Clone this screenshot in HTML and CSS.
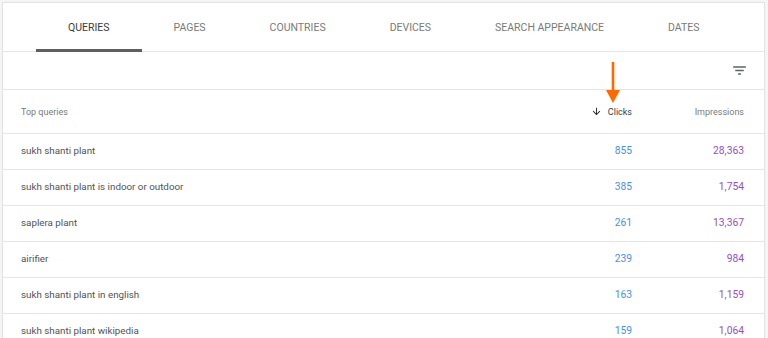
FILE: index.html
```html
<!DOCTYPE html>
<html lang="en">
<head>
    <meta charset="UTF-8">
    <meta name="viewport" content="width=device-width, initial-scale=1.0">
    <title>Performance - Queries</title>
    <link rel="stylesheet" href="styles.css">
</head>
<body>
    <div class="card">
        <div class="tabs">
            <div class="tab active">Queries</div>
            <div class="tab">Pages</div>
            <div class="tab">Countries</div>
            <div class="tab">Devices</div>
            <div class="tab">Search appearance</div>
            <div class="tab">Dates</div>
        </div>

        <div class="toolbar">
            <svg class="filter-icon" width="18" height="18" viewBox="0 0 24 24" fill="#5f6368">
                <path d="M10 18h4v-2h-4v2zM3 6v2h18V6H3zm3 7h12v-2H6v2z"/>
            </svg>
        </div>

        <div class="table">
            <div class="row head">
                <div class="cell">Top queries</div>
                <div class="cell num sorted">
                    <svg width="11" height="11" viewBox="0 0 24 24" fill="#202124">
                        <path d="M20 12l-1.41-1.41L13 16.17V4h-2v12.17l-5.58-5.59L4 12l8 8 8-8z"/>
                    </svg>
                    Clicks
                </div>
                <div class="cell num">Impressions</div>
            </div>
            <div class="row">
                <div class="cell">sukh shanti plant</div>
                <div class="cell num clicks">855</div>
                <div class="cell num impr">28,363</div>
            </div>
            <div class="row">
                <div class="cell">sukh shanti plant is indoor or outdoor</div>
                <div class="cell num clicks">385</div>
                <div class="cell num impr">1,754</div>
            </div>
            <div class="row">
                <div class="cell">saplera plant</div>
                <div class="cell num clicks">261</div>
                <div class="cell num impr">13,367</div>
            </div>
            <div class="row">
                <div class="cell">airifier</div>
                <div class="cell num clicks">239</div>
                <div class="cell num impr">984</div>
            </div>
            <div class="row">
                <div class="cell">sukh shanti plant in english</div>
                <div class="cell num clicks">163</div>
                <div class="cell num impr">1,159</div>
            </div>
            <div class="row">
                <div class="cell">sukh shanti plant wikipedia</div>
                <div class="cell num clicks">159</div>
                <div class="cell num impr">1,064</div>
            </div>
        </div>

        <!-- annotation arrow pointing at the sorted column -->
        <svg class="callout" width="20" height="44" viewBox="0 0 20 44">
            <rect x="8.7" y="0" width="2.6" height="30" fill="#ff6a00"/>
            <polygon points="3,28 17,28 10,41" fill="#ff6a00"/>
        </svg>
    </div>
</body>
</html>
```

FILE: styles.css
```css
body {
    margin: 0;
    background-color: #f5f5f5;
    font-family: Roboto, "Noto Sans", Arial, sans-serif;
    color: #3c4043;
}

.card {
    position: relative;
    margin: 2px 0 0 2px;
    width: 763px;
    height: 340px;
    box-sizing: border-box;
    background-color: #fff;
    border: 1px solid #e2e2e2;
    border-bottom: none;
    overflow: hidden;
}

.tabs {
    display: flex;
    height: 48px;
    padding-left: 33px;
    border-bottom: 1px solid #e6e6e6;
}

.tab {
    display: flex;
    align-items: center;
    padding: 2px 32px 0;
    font-size: 10.5px;
    text-transform: uppercase;
    color: #7a7a7a;
    border-bottom: 3px solid transparent;
    margin-bottom: -1px;
}

.tab.active {
    color: #3c3c3c;
    border-bottom-color: #5f5f5f;
}

.toolbar {
    display: flex;
    justify-content: flex-end;
    align-items: center;
    height: 37px;
    padding-right: 16px;
    border-bottom: 1px solid #e6e6e6;
}

.filter-icon {
    width: 17px;
    height: 17px;
}

.row {
    display: grid;
    grid-template-columns: 1fr 120px 112px;
    align-items: center;
    box-sizing: border-box;
    height: 36px;
    padding: 0 20px 3px 18px;
    border-bottom: 1px solid #e6e6e6;
    font-size: 9.8px;
    color: #505355;
}

.row.head {
    height: 44px;
    padding: 0 20px 0 18px;
    font-size: 9px;
    color: #7a7a7a;
}

.cell.num {
    text-align: right;
    font-size: 10.3px;
}

.row.head .cell.num {
    font-size: 9px;
}

.sorted {
    display: flex;
    justify-content: flex-end;
    align-items: center;
    gap: 6px;
    color: #3c4043;
}

.clicks {
    color: #4a8fe3;
}

.impr {
    color: #9650c2;
}

.callout {
    position: absolute;
    left: 600px;
    top: 59px;
}
```
